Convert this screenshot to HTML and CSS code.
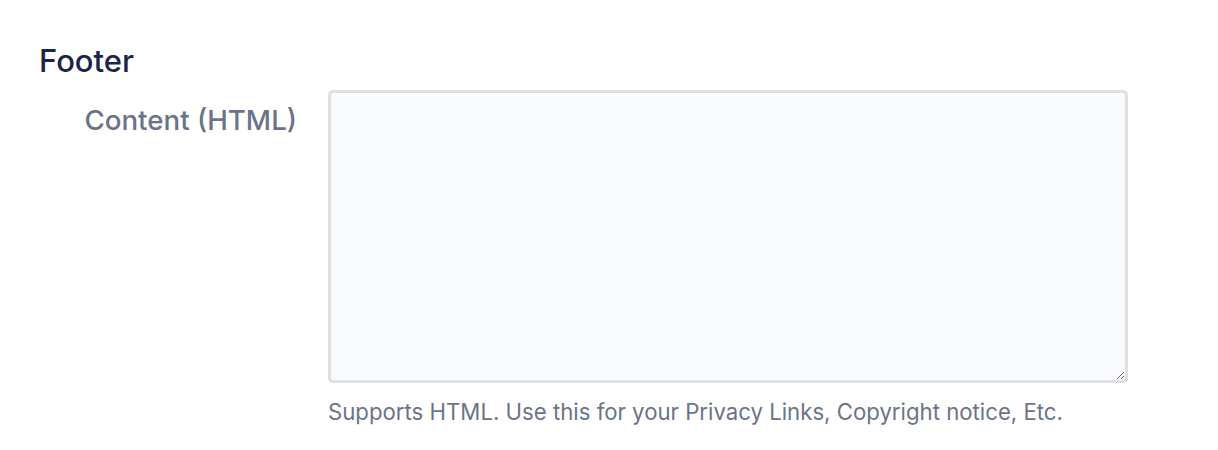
FILE: index.html
```html
<!DOCTYPE html>
<html>
<head>
<meta charset="utf-8">
<link rel="stylesheet" href="styles.css">
</head>
<body>
<section class="section">
  <h2 class="title">Footer</h2>
  <div class="row">
    <label class="label" for="footer-content">Content (HTML)</label>
    <div class="field">
      <textarea id="footer-content" class="textarea"></textarea>
      <p class="help">Supports HTML. Use this for your Privacy Links, Copyright notice, Etc.</p>
    </div>
  </div>
</section>
</body>
</html>
```
FILE: styles.css
```css
html, body {
  margin: 0;
  padding: 0;
  background: #ffffff;
}
body {
  font-family: Inter, "Noto Sans", "Liberation Sans", sans-serif;
}
.section {
  padding: 42px 0 0 39px;
}
.title {
  margin: 0;
  font-size: 31px;
  line-height: 38px;
  font-weight: 500;
  color: #1b2547;
}
.row {
  display: flex;
  gap: 31px;
  margin-top: 10px;
}
.label {
  width: 258px;
  text-align: right;
  font-size: 27.7px;
  line-height: 34px;
  font-weight: 500;
  color: #6b7388;
  padding-top: 13px;
  box-sizing: border-box;
  white-space: nowrap;
}
.field {
  display: flex;
  flex-direction: column;
}
.textarea {
  display: block;
  width: 800px;
  height: 293px;
  box-sizing: border-box;
  margin: 0;
  border: 3px solid #dfe0e6;
  border-radius: 5px;
  background: #f9fafb;
  outline: none;
  resize: vertical;
}
.help {
  margin: 15px 0 0 0;
  font-size: 22.2px;
  line-height: 28px;
  color: #6b7388;
}
```
